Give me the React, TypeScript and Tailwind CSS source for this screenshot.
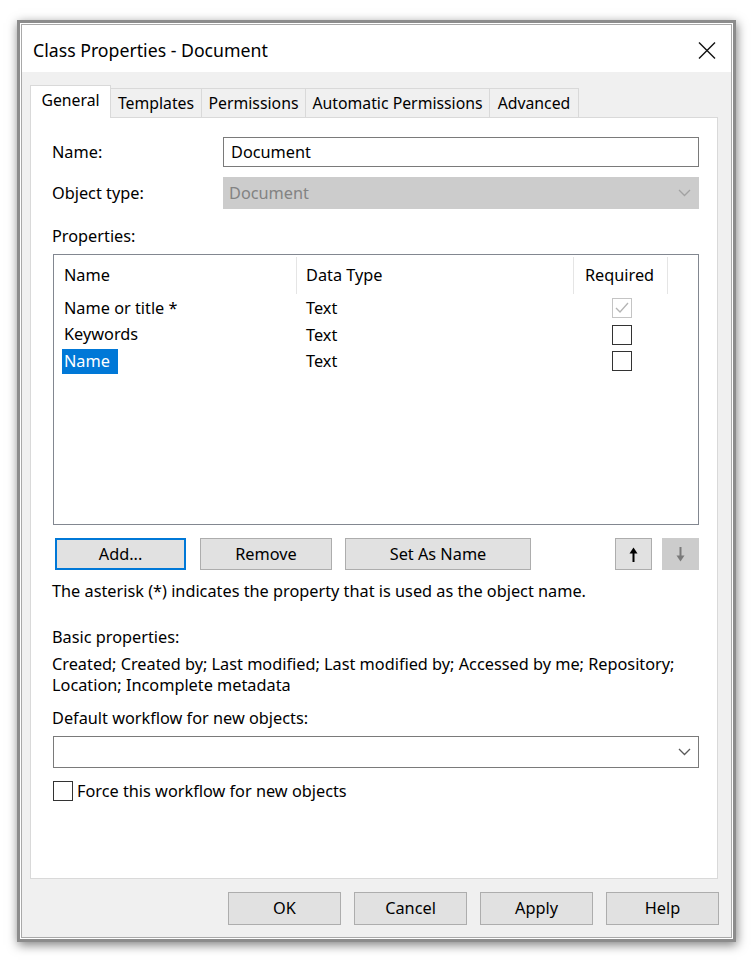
import React from "react";

const font = "font-['Segoe_UI','Noto_Sans',sans-serif]";

function Chevron({ disabled }: { disabled?: boolean }) {
  return (
    <svg width="13" height="8" viewBox="0 0 13 8" className="shrink-0">
      <polyline
        points="1,1 6.5,6.5 12,1"
        fill="none"
        stroke={disabled ? "#a2a2a2" : "#5a5a5a"}
        strokeWidth="1.3"
      />
    </svg>
  );
}

function Arrow({ down, color }: { down?: boolean; color: string }) {
  return (
    <svg
      width="9"
      height="15"
      viewBox="0 0 9 15"
      className={down ? "rotate-180" : ""}
    >
      <path d="M4.5 0.5 L8.5 6.5 L0.5 6.5 Z" fill={color} />
      <rect x="3.5" y="6" width="2" height="9" fill={color} />
    </svg>
  );
}

function Checkbox({ checked, disabled }: { checked?: boolean; disabled?: boolean }) {
  return (
    <div
      className={`flex h-[20px] w-[20px] shrink-0 items-center justify-center border ${
        disabled ? "border-[#c4c4c4] bg-white" : "border-[#333] bg-white"
      }`}
    >
      {checked && (
        <svg width="16" height="14" viewBox="0 0 16 14">
          <polyline
            points="2,7 6,11 14,2"
            fill="none"
            stroke="#b4b4b4"
            strokeWidth="1.3"
          />
        </svg>
      )}
    </div>
  );
}

const rows = [
  { name: "Name or title *", type: "Text", checked: true, disabled: true },
  { name: "Keywords", type: "Text" },
  { name: "Name", type: "Text", selected: true },
];

const tabs = [
  { label: "General", w: "w-[81px]" },
  { label: "Templates", w: "w-[92px]" },
  { label: "Permissions", w: "w-[105px]" },
  { label: "Automatic Permissions", w: "w-[185px]" },
  { label: "Advanced", w: "w-[90px]" },
];

export default function App() {
  return (
    <div className={`min-h-[963px] bg-white pl-[17px] pt-[20px] text-[16.3px] text-black ${font}`}>
      <div className="h-[922px] w-[719px] border-[3px] border-[#8c8c8c] bg-white p-px shadow-[1px_3px_10px_rgba(0,0,0,0.5)]">
        <div className="flex h-full flex-col border border-[#a9a9a9] bg-[#f0f0f0]">
          {/* title bar */}
          <div className="flex h-[47px] shrink-0 items-center justify-between bg-white pl-[11px] pr-[15px] pt-[3px]">
            <span className="text-[17.7px]">Class Properties - Document</span>
            <svg width="18" height="17" viewBox="0 0 18 17">
              <path d="M1 0.5 L17 16.5 M17 0.5 L1 16.5" stroke="#111" strokeWidth="1.4" />
            </svg>
          </div>

          {/* tabs */}
          <div className="ml-[8px] mt-[13px] flex h-[32px] items-end text-[15.8px]">
            {tabs.map((t, i) =>
              i === 0 ? (
                <div
                  key={t.label}
                  className={`relative z-10 -mb-px flex h-[33px] ${t.w} items-start justify-center border border-b-0 border-[#d9d9d9] bg-white pt-[3px]`}
                >
                  {t.label}
                </div>
              ) : (
                <div
                  key={t.label}
                  className={`-ml-px flex h-[29px] ${t.w} items-center justify-center whitespace-nowrap border border-b-0 border-[#d9d9d9] bg-[#f0f0f0] pt-px`}
                >
                  {t.label}
                </div>
              )
            )}
          </div>

          {/* panel */}
          <div className="ml-[8px] h-[762px] w-[688px] shrink-0 border border-[#d9d9d9] bg-white pl-[21px] pr-[18px] pt-[19px]">
            <div className="flex h-[30px] items-center">
              <span className="w-[171px]">Name:</span>
              <div className="flex h-[30px] flex-1 items-center border border-[#7a7a7a] px-[7px]">
                Document
              </div>
            </div>
            <div className="mt-[10px] flex h-[32px] items-center">
              <span className="w-[171px]">Object type:</span>
              <div className="flex h-[32px] flex-1 items-center justify-between border border-[#cccccc] bg-[#cccccc] pl-[5px] pr-[7px] text-[#838383]">
                Document
                <Chevron disabled />
              </div>
            </div>
            <div className="mt-[17px] h-[21px] leading-[21px]">Properties:</div>

            {/* list */}
            <div className="ml-px mt-[7px] h-[271px] border border-[#828790] bg-white">
              <div className="flex h-[40px] items-center">
                <div className="flex h-[37px] w-[243px] items-center border-r border-[#e5e5e5] pl-[10px]">Name</div>
                <div className="flex h-[37px] w-[277px] items-center border-r border-[#e5e5e5] pl-[9px]">Data Type</div>
                <div className="flex h-[37px] w-[94px] items-center justify-center border-r border-[#e5e5e5] pr-[2px]">Required</div>
              </div>
              {rows.map((r) => (
                <div key={r.name} className="flex h-[26.5px] items-center">
                  <div className="w-[243px] pl-[8px]">
                    <span
                      className={`inline-block h-[25px] pl-[2px] pr-[8px] leading-[25px] ${
                        r.selected ? "bg-[#0078d7] text-white" : ""
                      }`}
                    >
                      {r.name}
                    </span>
                  </div>
                  <div className="w-[277px] pl-[9px]">{r.type}</div>
                  <div className="flex w-[94px] justify-center pl-[2px]">
                    <Checkbox checked={r.checked} disabled={r.disabled} />
                  </div>
                </div>
              ))}
            </div>

            {/* buttons */}
            <div className="ml-[3px] mt-[13px] flex h-[32px] items-stretch">
              <div className="flex w-[131px] items-center justify-center border-2 border-[#0078d7] bg-[#e1e1e1]">Add...</div>
              <div className="ml-[14px] flex w-[132px] items-center justify-center border border-[#adadad] bg-[#e1e1e1]">Remove</div>
              <div className="ml-[13px] flex w-[186px] items-center justify-center border border-[#adadad] bg-[#e1e1e1]">Set As Name</div>
              <div className="ml-auto flex w-[37px] items-center justify-center border border-[#adadad] bg-[#e1e1e1]">
                <Arrow color="#000" />
              </div>
              <div className="ml-[10px] flex w-[37px] items-center justify-center border border-[#cccccc] bg-[#cccccc]">
                <Arrow down color="#7a7a7a" />
              </div>
            </div>

            <div className="mt-[11px] h-[21px] leading-[21px]">
              The asterisk (*) indicates the property that is used as the object name.
            </div>
            <div className="mt-[25px] h-[21px] leading-[21px]">Basic properties:</div>
            <div className="mt-[6px] whitespace-nowrap leading-[21px]">
              Created; Created by; Last modified; Last modified by; Accessed by me; Repository;
              <br />
              Location; Incomplete metadata
            </div>
            <div className="mt-[12px] h-[21px] leading-[21px]">Default workflow for new objects:</div>
            <div className="ml-px mt-[7px] flex h-[32px] items-center justify-end border border-[#7a7a7a] pr-[7px]">
              <Chevron />
            </div>
            <div className="ml-px mt-[11px] flex items-center gap-[4px]">
              <Checkbox />
              <span>Force this workflow for new objects</span>
            </div>
          </div>

          {/* dialog buttons */}
          <div className="mr-[12px] mt-[13px] flex justify-end gap-[13px]">
            {["OK", "Cancel", "Apply", "Help"].map((b) => (
              <div
                key={b}
                className="flex h-[33px] w-[113px] items-center justify-center border border-[#adadad] bg-[#e1e1e1]"
              >
                {b}
              </div>
            ))}
          </div>
        </div>
      </div>
    </div>
  );
}
